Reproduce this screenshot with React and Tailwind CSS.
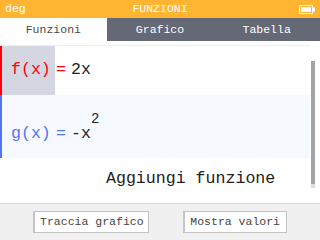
import { } from 'react';

const mono = { fontFamily: '"Liberation Mono", "DejaVu Sans Mono", monospace' };

const Battery = () => (
  <svg width="16" height="9" viewBox="0 0 16 9" className="block">
    <rect x="0.5" y="0.5" width="13" height="8" fill="none" stroke="white" strokeWidth="1" />
    <rect x="2" y="2" width="10" height="5" fill="white" />
    <rect x="14" y="2.5" width="2" height="4" fill="white" />
  </svg>
);

// Barra superiore con modalità angolo e titolo app
const Header = () => (
  <header className="h-[18px] bg-[#ffb531] flex items-center justify-between px-[5px] text-white text-[11.5px] leading-none relative">
    <span>deg</span>
    <span className="absolute left-0 right-0 text-center pointer-events-none">FUNZIONI</span>
    <Battery />
  </header>
);

const Tabs = () => (
  <nav className="h-[23px] flex bg-[#656975] text-[11.5px] leading-none">
    <div className="flex-1 bg-white text-[#4b4b4b] flex items-center justify-center">Funzioni</div>
    <div className="flex-1 text-white flex items-center justify-center">Grafico</div>
    <div className="flex-1 text-white flex items-center justify-center">Tabella</div>
  </nav>
);

function App() {
  return (
    <div className="w-[320px] h-[240px] overflow-hidden flex flex-col bg-white" style={mono}>
      <Header />
      <Tabs />

      {/* lista funzioni */}
      <main className="flex-1 flex min-h-0">
        <div className="flex-1 flex flex-col pt-[4px]">
          <div className="h-[50px] flex border-t border-[#eeeeee] text-[16.6px] leading-none">
            <div className="w-[2px] bg-[#ff000c]" />
            <div className="w-[53px] bg-[#d4d7e2] pt-[16px] pl-[9px] text-[#ff000c]">f(x)</div>
            <div className="pt-[16px] pl-[1px] text-[#ff000c]">=</div>
            <div className="pt-[16px] ml-[5px] text-[#222]">2x</div>
          </div>
          <div className="h-[63px] flex bg-[#f6f9ff] text-[16.6px] leading-none">
            <div className="w-[2px] bg-[#5075f2]" />
            <div className="w-[53px] pt-[31px] pl-[9px] text-[#5075f2]">g(x)</div>
            <div className="pt-[31px] pl-[1px] text-[#5075f2]">=</div>
            <div className="pt-[31px] ml-[5px] text-[#222]">
              -x<span className="relative -top-[15px] text-[14px]">2</span>
            </div>
          </div>
          <div className="flex-1 flex items-center pl-[106px] text-[16.6px] leading-none text-[#222] pb-[2px]">
            Aggiungi funzione
          </div>
        </div>
        <div className="w-[10px] pt-[20px] pl-[1px]">
          <div className="w-[4px] h-[123px] bg-[#a3a3a3]" />
          <div className="w-[4px] h-[4px] bg-[#dcdcdc]" />
        </div>
      </main>

      <footer className="h-[37px] bg-[#f0f0f0] border-t border-[#d9d9d9] flex items-center justify-evenly text-[11.5px] leading-none text-[#444]">
        <button className="h-[22px] w-[116px] bg-white border border-[#c4c4c4] border-l-2 flex items-center justify-center">Traccia grafico</button>
        <button className="h-[22px] w-[104px] bg-white border border-[#c4c4c4] border-l-2 flex items-center justify-center">Mostra valori</button>
      </footer>
    </div>
  );
}

export default App;
